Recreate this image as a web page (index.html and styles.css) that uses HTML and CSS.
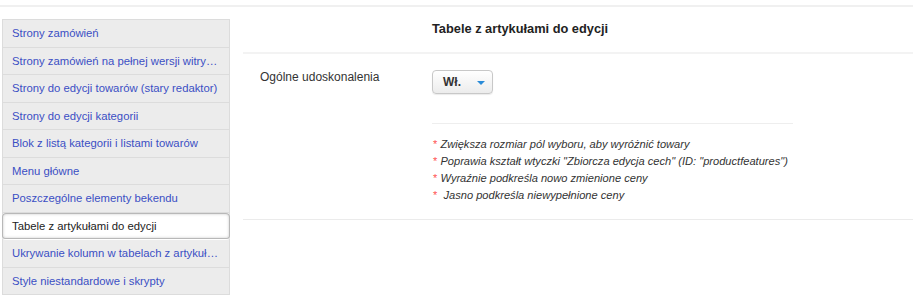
FILE: index.html
```html
<!DOCTYPE html>
<html lang="pl">
<head>
  <meta charset="UTF-8">
  <title>Tabele z artykułami do edycji</title>
  <link rel="stylesheet" href="styles.css">
</head>
<body>
  <div class="page">
    <ul class="side-menu">
      <li><a href="#">Strony zamówień</a></li>
      <li><a href="#">Strony zamówień na pełnej wersji witry…</a></li>
      <li><a href="#">Strony do edycji towarów (stary redaktor)</a></li>
      <li><a href="#">Strony do edycji kategorii</a></li>
      <li><a href="#">Blok z listą kategorii i listami towarów</a></li>
      <li><a href="#">Menu główne</a></li>
      <li><a href="#">Poszczególne elementy bekendu</a></li>
      <li class="active"><a href="#">Tabele z artykułami do edycji</a></li>
      <li><a href="#">Ukrywanie kolumn w tabelach z artykuł…</a></li>
      <li><a href="#">Style niestandardowe i skrypty</a></li>
    </ul>

    <div class="settings">
      <div class="settings-head">
        <h3>Tabele z artykułami do edycji</h3>
      </div>
      <div class="setting-row">
        <div class="setting-label">Ogólne udoskonalenia</div>
        <div class="setting-control">
          <button class="select-btn">Wł. <span class="caret"></span></button>
          <ul class="notes">
            <li><span class="star">*</span> Zwiększa rozmiar pól wyboru, aby wyróżnić towary</li>
            <li><span class="star">*</span> Poprawia kształt wtyczki "Zbiorcza edycja cech" (ID: "productfeatures")</li>
            <li><span class="star">*</span> Wyraźnie podkreśla nowo zmienione ceny</li>
            <li><span class="star">*</span>&nbsp; Jasno podkreśla niewypełnione ceny</li>
          </ul>
        </div>
      </div>
    </div>
  </div>
</body>
</html>
```

FILE: styles.css
```css
body {
  margin: 0;
  font-family: 'Liberation Sans', Arial, sans-serif;
  font-size: 12px;
  color: #333;
  background: #fff;
}
.page {
  display: flex;
  align-items: flex-start;
  width: 913px;
  margin-top: 5px;
  border-top: 2px solid #f0f0f0;
}
.side-menu {
  list-style: none;
  margin: 12px 0 0 2px;
  padding: 0;
  width: 226px;
  flex-shrink: 0;
  background: #ececec;
  border: 1px solid #dcdcdc;
  border-bottom: none;
  font-size: 11.3px;
}
.side-menu li {
  border-bottom: 1px solid #dcdcdc;
  height: 26.5px;
  line-height: 26.5px;
  padding: 0 9px;
  white-space: nowrap;
  overflow: hidden;
}
.side-menu a {
  color: #3b4fc4;
  text-decoration: none;
}
.side-menu li.active {
  background: #fff;
  border-radius: 4px;
  margin: 0 -1px;
  padding: 0 10px;
  border-bottom-color: transparent;
  box-shadow: inset 0 0 0 1px #b8b8b8, inset 0 0 3px 1px #c8c8c8;
}
.side-menu li.active a {
  color: #222;
}
.settings {
  flex: 1;
  margin-left: 13px;
}
.settings-head {
  height: 45px;
  padding-left: 189px;
  border-bottom: 2px solid #f3f3f3;
}
.settings-head h3 {
  margin: 0;
  font-size: 12.8px;
  font-weight: bold;
  color: #222;
  line-height: 43px;
}
.setting-row {
  display: flex;
  padding: 16px 0 15px;
  border-bottom: 1px solid #ebebeb;
}
.setting-label {
  width: 172px;
  padding-left: 17px;
  font-size: 12px;
  line-height: 14px;
  color: #333;
}
.setting-control {
  flex: 1;
}
.select-btn {
  height: 24px;
  width: 61px;
  padding: 0 0 0 10px;
  text-align: left;
  font-family: inherit;
  font-size: 12px;
  font-weight: bold;
  color: #333;
  background: linear-gradient(#fff, #ececec);
  border: 1px solid #c8c8c8;
  border-radius: 4px;
  box-shadow: 0 1px 1px rgba(0, 0, 0, 0.08);
}
.caret {
  display: inline-block;
  margin-left: 13px;
  vertical-align: middle;
  border-left: 4px solid transparent;
  border-right: 4px solid transparent;
  border-top: 4px solid #2a8bd8;
}
.notes {
  list-style: none;
  width: 360px;
  margin: 29px 0 0;
  padding: 12px 0 0 1px;
  border-top: 1px solid #eee;
  font-size: 11.1px;
  font-style: italic;
  line-height: 17px;
  color: #333;
}
.star {
  color: #f55;
  font-style: normal;
}
```
